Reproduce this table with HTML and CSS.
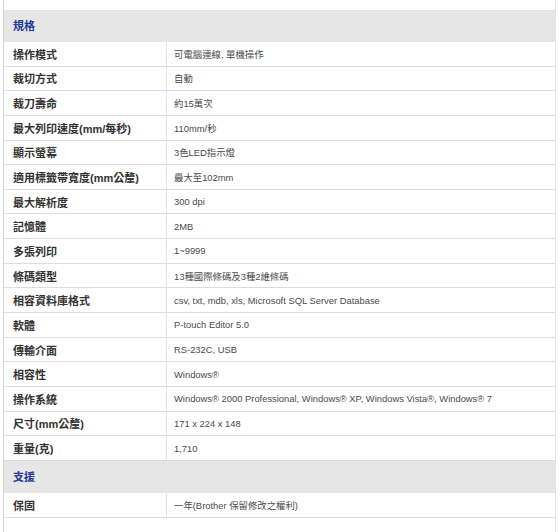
FILE: index.html
```html
<!DOCTYPE html>
<html lang="zh-Hant">
<head>
<meta charset="utf-8">
<title>規格</title>
<link rel="stylesheet" href="styles.css">
</head>
<body>
<div class="frame">
  <div class="sec">規格</div>
  <div class="row"><div class="k">操作模式</div><div class="v">可電腦連線, 單機操作</div></div>
  <div class="row"><div class="k">裁切方式</div><div class="v">自動</div></div>
  <div class="row"><div class="k">裁刀壽命</div><div class="v">約15萬次</div></div>
  <div class="row"><div class="k">最大列印速度(mm/每秒)</div><div class="v">110mm/秒</div></div>
  <div class="row"><div class="k">顯示螢幕</div><div class="v">3色LED指示燈</div></div>
  <div class="row"><div class="k">適用標籤帶寬度(mm公釐)</div><div class="v">最大至102mm</div></div>
  <div class="row"><div class="k">最大解析度</div><div class="v">300 dpi</div></div>
  <div class="row"><div class="k">記憶體</div><div class="v">2MB</div></div>
  <div class="row"><div class="k">多張列印</div><div class="v">1~9999</div></div>
  <div class="row"><div class="k">條碼類型</div><div class="v">13種國際條碼及3種2維條碼</div></div>
  <div class="row"><div class="k">相容資料庫格式</div><div class="v">csv, txt, mdb, xls, Microsoft SQL Server Database</div></div>
  <div class="row"><div class="k">軟體</div><div class="v">P-touch Editor 5.0</div></div>
  <div class="row"><div class="k">傳輸介面</div><div class="v">RS-232C, USB</div></div>
  <div class="row"><div class="k">相容性</div><div class="v">Windows®</div></div>
  <div class="row"><div class="k">操作系統</div><div class="v">Windows® 2000 Professional, Windows® XP, Windows Vista®, Windows® 7</div></div>
  <div class="row"><div class="k">尺寸(mm公釐)</div><div class="v">171 x 224 x 148</div></div>
  <div class="row"><div class="k">重量(克)</div><div class="v">1,710</div></div>
  <div class="sec">支援</div>
  <div class="row"><div class="k">保固</div><div class="v">一年(Brother 保留修改之權利)</div></div>
</div>
</body>
</html>
```
FILE: styles.css
```css
html, body {
  margin: 0;
  padding: 0;
  background: #fff;
}
body {
  font-family: "Liberation Sans", Arial, "Noto Sans CJK TC", sans-serif;
}
.frame {
  margin-left: 3px;
  width: 553px;
  min-height: 532px;
  box-sizing: border-box;
  padding-top: 10px;
  border-left: 1px solid #d4d4d4;
  border-right: 1px solid #e4e4e4;
}
.sec {
  height: 32px;
  line-height: 32px;
  background: #e6e6e6;
  color: #23389a;
  font-weight: bold;
  font-size: 11px;
  padding-left: 9px;
}
.row {
  display: grid;
  grid-template-columns: 163px 1fr;
  height: 24.65px;
  box-sizing: border-box;
  border-bottom: 1px solid #dcdcdc;
}
.k {
  display: flex;
  align-items: center;
  padding-left: 9px;
  border-right: 1px solid #e2e2e2;
  font-size: 11px;
  font-weight: bold;
  color: #333;
}
.v {
  display: flex;
  align-items: center;
  padding-left: 7px;
  font-size: 9.4px;
  color: #4a4a4a;
  white-space: nowrap;
}
```
